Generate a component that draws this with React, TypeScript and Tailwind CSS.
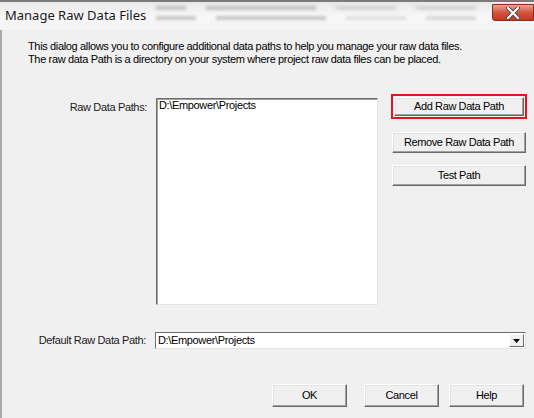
import React from "react";

const font = { fontFamily: '"Liberation Sans", Arial, sans-serif' };

const WinButton = ({ label, className = "" }: { label: string; className?: string }) => (
  <button
    className={`flex items-center justify-center bg-[#f0f0f0] border border-t-white border-l-white border-r-[#696969] border-b-[#696969] shadow-[inset_-1px_-1px_0_#a0a0a0,inset_1px_1px_0_#e3e3e3] text-[11px] tracking-[-0.4px] text-black ${className}`}
  >
    {label}
  </button>
);

const App = () => {
  return (
    <main
      className="w-[534px] h-[418px] overflow-hidden bg-[#f0f0f0] flex flex-col"
      style={font}
    >
      {/* title bar */}
      <div className="h-[30px] shrink-0 flex bg-gradient-to-b from-[#e8e8e8] via-[#f7f7f7] to-[#f4f4f4] border-t-2 border-[#7a7a7a]">
        <div className="flex shrink-0 items-center pl-[5px] h-[28px]">
          <span
            className="whitespace-nowrap text-[13px] text-[#1a1a1a]"
            style={{ fontFamily: '"Noto Sans", "Open Sans", sans-serif' }}
          >
            Manage Raw Data Files
          </span>
        </div>
        <div className="flex flex-col gap-[6px] ml-[10px] pt-[4px] blur-[1.5px] opacity-50">
          <div className="flex gap-5">
            <div className="w-[30px] h-[4px] bg-[#9a9a9a]" />
            <div className="w-[110px] h-[4px] bg-[#9a9a9a]" />
            <div className="w-[60px] h-[4px] bg-[#b9b9b9]" />
            <div className="w-[60px] h-[4px] bg-[#b9b9b9]" />
          </div>
          <div className="flex gap-5">
            <div className="w-[40px] h-[4px] bg-[#9a9a9a]" />
            <div className="w-[110px] h-[4px] bg-[#9a9a9a]" />
            <div className="w-[60px] h-[4px] bg-[#c9c9c9]" />
            <div className="w-[50px] h-[4px] bg-[#b9b9b9]" />
          </div>
        </div>
        <div className="ml-auto mt-[2px] w-[42px] h-[17px] rounded-bl-[3px] border border-[#8a2b1c] bg-gradient-to-b from-[#e8a193] via-[#d4553f] to-[#c23a20] flex items-center justify-center">
          <svg width="14" height="12" viewBox="0 0 14 12">
            <path
              d="M2 1 L12 11 M12 1 L2 11"
              stroke="#4a4a4a"
              strokeWidth="4"
              strokeLinecap="round"
            />
            <path
              d="M2 1 L12 11 M12 1 L2 11"
              stroke="#ffffff"
              strokeWidth="2.2"
              strokeLinecap="round"
            />
          </svg>
        </div>
      </div>

      {/* client area */}
      <div className="flex-1 flex flex-col border-l-2 border-[#a9a9a9] bg-[#f0f0f0]">
        <div className="pl-[26px] pt-[10px] text-[11px] leading-[13px] tracking-[-0.35px] text-black">
          <p>This dialog allows you to configure additional data paths to help you manage your raw data files.</p>
          <p>The raw data Path is a directory on your system where project raw data files can be placed.</p>
        </div>

        <div className="flex mt-[28px]">
          <div className="w-[145px] pt-[5px] text-right text-[11px] tracking-[-0.35px] text-[#1a1a1a]">
            Raw Data Paths:
          </div>
          <div className="ml-[9px] mt-[4px] w-[222px] h-[207px] bg-white border border-t-[#6e6e6e] border-l-[#6e6e6e] border-r-[#e3e3e3] border-b-[#e3e3e3] shadow-[inset_1px_1px_0_#a0a0a0] px-[2px] text-[11px] tracking-[-0.35px] leading-[13px] text-black">
            D:\Empower\Projects
          </div>
          <div className="ml-[13px] flex flex-col w-[136px]">
            <div className="h-[25px] border-2 border-[#e8131b] p-[1px] flex">
              <WinButton label="Add Raw Data Path" className="flex-1" />
            </div>
            <WinButton label="Remove Raw Data Path" className="mt-[13px] h-[21px] ml-[1px] w-[134px]" />
            <WinButton label="Test Path" className="mt-[12px] h-[21px] ml-[1px] w-[134px]" />
          </div>
        </div>

        <div className="flex items-center mt-[27px]">
          <div className="w-[144px] text-right text-[11px] tracking-[-0.35px] text-[#1a1a1a]">
            Default Raw Data Path:
          </div>
          <div className="ml-[9px] w-[371px] h-[17px] bg-white border border-t-[#6e6e6e] border-l-[#6e6e6e] border-r-[#e3e3e3] border-b-[#e3e3e3] flex items-center">
            <span className="flex-1 pl-[2px] text-[11px] tracking-[-0.35px] text-black">
              D:\Empower\Projects
            </span>
            <div className="w-[15px] h-[13px] mr-[1px] bg-[#f0f0f0] border border-t-white border-l-white border-r-[#696969] border-b-[#696969] flex items-center justify-center">
              <svg width="7" height="4" viewBox="0 0 7 4">
                <path d="M0 0 L7 0 L3.5 4 Z" fill="#000" />
              </svg>
            </div>
          </div>
        </div>

        <div className="flex mt-[35px] pl-[270px]">
          <WinButton label="OK" className="w-[75px] h-[23px]" />
          <WinButton label="Cancel" className="ml-[17px] w-[75px] h-[23px]" />
          <WinButton label="Help" className="ml-[10px] w-[75px] h-[23px]" />
        </div>
      </div>
    </main>
  );
};

export default App;
